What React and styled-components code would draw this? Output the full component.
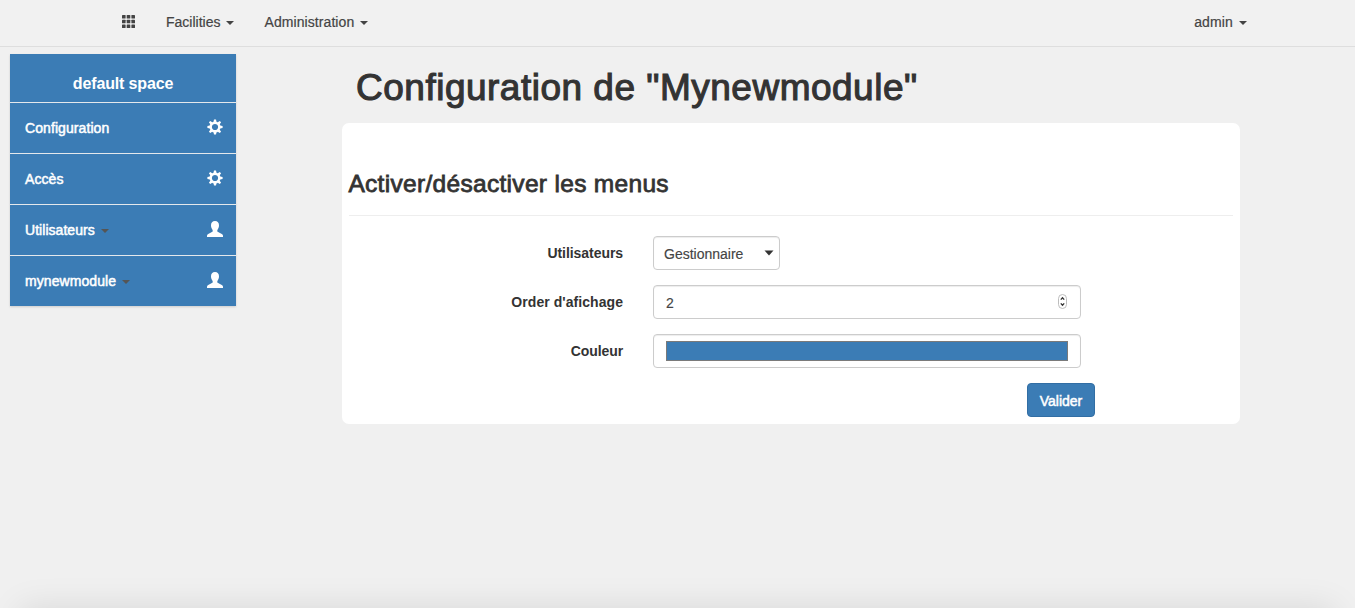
import React from "react";
import styled, { createGlobalStyle } from "styled-components";

const Global = createGlobalStyle`
  * { box-sizing: border-box; }
  body {
    margin: 0;
    height: 608px;
    overflow: hidden;
    background: #f0f0f0;
    color: #333;
    font: 14px/20px "Liberation Sans", Arial, sans-serif;
  }
`;

const Navbar = styled.nav`
  display: flex;
  align-items: center;
  height: 47px;
  padding: 0 108px 3px 122px;
  background: #f1f1f1;
  border-bottom: 1px solid #dedede;
`;
const NavLink = styled.a`
  display: flex;
  align-items: center;
  gap: 6px;
  margin-left: ${(p) => p.$gap || "auto"};
  color: #444;
  letter-spacing: ${(p) => p.$track || "0"};
  -webkit-text-stroke: 0.2px #444;
`;
const Caret = styled.span`
  width: 0;
  height: 0;
  margin-top: 2px;
  border: 4px solid transparent;
  border-top-color: ${(p) => p.$color || "#444"};
  border-bottom: 0;
`;

const Page = styled.div`
  display: flex;
  align-items: flex-start;
  padding: 7px 0 0 10px;
`;
const Sidebar = styled.aside`
  width: 226px;
  flex: none;
  background: #3b7cb5;
  color: #fff;
  box-shadow: 0 1px 2px rgba(0, 0, 0, 0.15);
`;
const SpaceName = styled.div`
  height: 48px;
  padding-top: 20px;
  text-align: center;
  font-size: 16px;
  font-weight: 700;
  letter-spacing: -0.15px;
`;
const MenuItem = styled.a`
  display: flex;
  align-items: center;
  height: 51px;
  padding: 0 13px 0 15px;
  border-top: 1px solid #e4e8ec;
  -webkit-text-stroke: 0.5px #fff;
  letter-spacing: ${(p) => p.$track || "0"};

  ${Caret} { margin-left: 6px; }
  svg { margin: -2px 0 0 auto; }
`;

const Content = styled.main`
  width: 898px;
  margin-left: 106px;
`;
const Title = styled.h1`
  margin: 14px 0 15px 14px;
  font-size: 37px;
  line-height: 40px;
  font-weight: 400;
  letter-spacing: 0.5px;
  white-space: nowrap;
  -webkit-text-stroke: 1.1px #333;
`;
const Panel = styled.section`
  height: 301px;
  padding: 47px 7px 7px;
  border-radius: 7px;
  background: #fff;
`;
const Legend = styled.h3`
  margin: 0 0 20px;
  height: 46px;
  border-bottom: 1px solid #eee;
  font-size: 24.5px;
  line-height: 27px;
  font-weight: 400;
  letter-spacing: 0.31px;
  text-indent: -0.6px;
  -webkit-text-stroke: 0.8px #333;
`;
const FormRow = styled.div`
  display: flex;
  align-items: center;
  height: 34px;
  margin-bottom: 15px;
`;
const Label = styled.label`
  width: 274px;
  margin-right: 30px;
  text-align: right;
  font-weight: 700;
  letter-spacing: ${(p) => p.$track || "0"};
`;
const Control = styled.div`
  display: flex;
  align-items: center;
  justify-content: space-between;
  width: ${(p) => p.$width || "428px"};
  height: 34px;
  padding: ${(p) => p.$pad || "0 12px"};
  border: 1px solid #ccc;
  border-radius: 4px;
  background: #fff;
  box-shadow: inset 0 1px 1px rgba(0, 0, 0, 0.075);
  color: #444;
  -webkit-text-stroke: 0.15px #444;
`;
const Value = styled.span`
  padding-top: 1px;
`;
const Swatch = styled.div`
  width: 402px;
  height: 20px;
  border: 1px solid #7a7a7a;
  background: #3b7cb5;
`;
const Actions = styled.div`
  display: flex;
  justify-content: flex-end;
  width: 746px;
`;
const Submit = styled.button`
  width: 68px;
  height: 34px;
  padding: 2px 0 0;
  border: 1px solid #326ea4;
  border-radius: 4px;
  background: #3b7cb5;
  color: #fff;
  font: inherit;
  -webkit-text-stroke: 0.5px #fff;
`;
const BottomShadow = styled.div`
  position: fixed;
  top: 100%;
  left: 24px;
  right: 24px;
  height: 40px;
  box-shadow: 0 4px 34px 4px rgba(0, 0, 0, 0.1);
`;

const GridIcon = () => (
  <svg width="13" height="13" viewBox="0 0 13 13" fill="#444">
    {[0, 4.7, 9.4].flatMap((y) =>
      [0, 4.7, 9.4].map((x) => (
        <rect key={`${x}-${y}`} x={x} y={y} width="3.6" height="3.6" rx="0.6" />
      ))
    )}
  </svg>
);

const CogIcon = () => (
  <svg width="16" height="16" viewBox="-8 -8 16 16">
    <circle r="4.3" fill="none" stroke="#fff" strokeWidth="2.4" />
    {[0, 45, 90, 135, 180, 225, 270, 315].map((a) => (
      <path key={a} d="M-1.5 -5L-1 -7.6H1L1.5 -5Z" fill="#fff" transform={`rotate(${a})`} />
    ))}
  </svg>
);

const UserIcon = () => (
  <svg width="16" height="16" viewBox="0 0 16 16" fill="#fff">
    <path d="M8 0C5.400 0 4 1.700 4 4.200c0 1.700.5 3.200 1.300 4.200.3.400.4.700.4 1.200v.3c0 .5-.3.800-.8 1.100L1.200 13.100C.4 13.600 0 14.100 0 14.800V16h16v-1.200c0-.7-.4-1.200-1.200-1.700L11.100 11c-.5-.3-.8-.6-.8-1.100v-.3c0-.5.100-.8.400-1.200C11.500 7.400 12 5.900 12 4.200 12 1.700 10.600 0 8 0Z" />
  </svg>
);

const StepperShape = styled.svg`
  margin-top: -2px;
`;
const Stepper = () => (
  <StepperShape width="9" height="15" viewBox="0 0 9 15" fill="none">
    <rect x="0.5" y="0.5" width="8" height="14" rx="4" stroke="#bdbdbd" />
    <path d="M2.8 5.6L4.5 3.7 6.2 5.6M2.8 9.4L4.5 11.3 6.2 9.4" stroke="#333" strokeWidth="1.3" />
  </StepperShape>
);

const SelectArrow = () => (
  <svg width="10" height="6" viewBox="0 0 10 6">
    <path d="M0.5 0.5H9.5L5 5.6Z" fill="#333" />
  </svg>
);

const MENU = [
  { label: "Configuration", icon: CogIcon, track: "0.08px" },
  { label: "Accès", icon: CogIcon, track: "0.08px" },
  { label: "Utilisateurs", icon: UserIcon, caret: true, track: "0.04px" },
  { label: "mynewmodule", icon: UserIcon, caret: true, track: "0.08px" },
];

export default function App() {
  return (
    <>
      <Global />
      <Navbar>
        <GridIcon />
        <NavLink $gap="31px">Facilities<Caret /></NavLink>
        <NavLink $gap="30px" $track="0.08px">Administration<Caret /></NavLink>
        <NavLink $track="0.14px">admin<Caret /></NavLink>
      </Navbar>
      <Page>
        <Sidebar>
          <SpaceName>default space</SpaceName>
          {MENU.map(({ label, icon: Icon, caret, track }) => (
            <MenuItem key={label} $track={track}>
              {label}
              {caret && <Caret $color="#555" />}
              <Icon />
            </MenuItem>
          ))}
        </Sidebar>
        <Content>
          <Title>Configuration de "Mynewmodule"</Title>
          <Panel>
            <Legend>Activer/désactiver les menus</Legend>
            <FormRow>
              <Label $track="-0.06px">Utilisateurs</Label>
              <Control $width="127px" $pad="0 5px 0 10px"><Value>Gestionnaire</Value><SelectArrow /></Control>
            </FormRow>
            <FormRow>
              <Label $track="0.06px">Order d'afichage</Label>
              <Control $pad="0 13px 0 12px"><Value>2</Value><Stepper /></Control>
            </FormRow>
            <FormRow>
              <Label $track="-0.1px">Couleur</Label>
              <Control><Swatch /></Control>
            </FormRow>
            <Actions><Submit>Valider</Submit></Actions>
          </Panel>
        </Content>
      </Page>
      <BottomShadow />
    </>
  );
}
